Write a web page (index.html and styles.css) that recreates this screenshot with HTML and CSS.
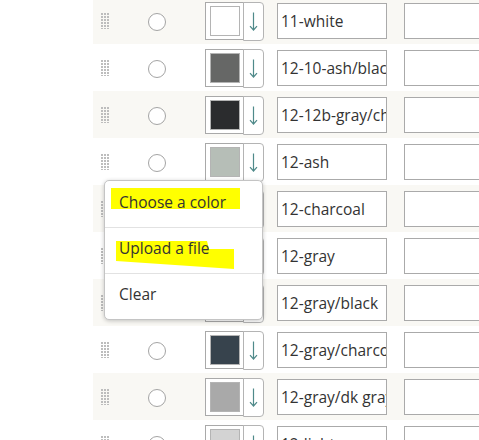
FILE: index.html
```html
<!DOCTYPE html>
<html>
<head>
<meta charset="utf-8">
<link rel="stylesheet" href="styles.css">
</head>
<body>
<div class="page">
  <div class="list">
    <div class="row alt">
      <span class="handle"></span><span class="radio"></span>
      <div class="picker"><span class="swatch-box"><span class="swatch" style="background:#ffffff"></span></span><span class="arrow-btn"><svg width="9" height="19" viewBox="0 0 9 19"><path d="M4.5 0.5V18M1 14.2L4.5 18L8 14.2" /></svg></span></div>
      <input class="name" value="11-white"><input class="extra" value="">
    </div>
    <div class="row">
      <span class="handle"></span><span class="radio"></span>
      <div class="picker"><span class="swatch-box"><span class="swatch" style="background:#666766"></span></span><span class="arrow-btn"><svg width="9" height="19" viewBox="0 0 9 19"><path d="M4.5 0.5V18M1 14.2L4.5 18L8 14.2" /></svg></span></div>
      <input class="name" value="12-10-ash/black"><input class="extra" value="">
    </div>
    <div class="row alt">
      <span class="handle"></span><span class="radio"></span>
      <div class="picker"><span class="swatch-box"><span class="swatch" style="background:#2b2c2e"></span></span><span class="arrow-btn"><svg width="9" height="19" viewBox="0 0 9 19"><path d="M4.5 0.5V18M1 14.2L4.5 18L8 14.2" /></svg></span></div>
      <input class="name" value="12-12b-gray/charcoal"><input class="extra" value="">
    </div>
    <div class="row">
      <span class="handle"></span><span class="radio"></span>
      <div class="picker"><span class="swatch-box"><span class="swatch" style="background:#b6beb7"></span></span><span class="arrow-btn"><svg width="9" height="19" viewBox="0 0 9 19"><path d="M4.5 0.5V18M1 14.2L4.5 18L8 14.2" /></svg></span></div>
      <input class="name" value="12-ash"><input class="extra" value="">
    </div>
    <div class="row alt">
      <span class="handle"></span><span class="radio"></span>
      <div class="picker"><span class="swatch-box"><span class="swatch" style="background:#36454f"></span></span><span class="arrow-btn"><svg width="9" height="19" viewBox="0 0 9 19"><path d="M4.5 0.5V18M1 14.2L4.5 18L8 14.2" /></svg></span></div>
      <input class="name" value="12-charcoal"><input class="extra" value="">
    </div>
    <div class="row">
      <span class="handle"></span><span class="radio"></span>
      <div class="picker"><span class="swatch-box"><span class="swatch" style="background:#808080"></span></span><span class="arrow-btn"><svg width="9" height="19" viewBox="0 0 9 19"><path d="M4.5 0.5V18M1 14.2L4.5 18L8 14.2" /></svg></span></div>
      <input class="name" value="12-gray"><input class="extra" value="">
    </div>
    <div class="row alt">
      <span class="handle"></span><span class="radio"></span>
      <div class="picker"><span class="swatch-box"><span class="swatch" style="background:#555555"></span></span><span class="arrow-btn"><svg width="9" height="19" viewBox="0 0 9 19"><path d="M4.5 0.5V18M1 14.2L4.5 18L8 14.2" /></svg></span></div>
      <input class="name" value="12-gray/black"><input class="extra" value="">
    </div>
    <div class="row">
      <span class="handle"></span><span class="radio"></span>
      <div class="picker"><span class="swatch-box"><span class="swatch" style="background:#37434d"></span></span><span class="arrow-btn"><svg width="9" height="19" viewBox="0 0 9 19"><path d="M4.5 0.5V18M1 14.2L4.5 18L8 14.2" /></svg></span></div>
      <input class="name" value="12-gray/charcoal"><input class="extra" value="">
    </div>
    <div class="row alt">
      <span class="handle"></span><span class="radio"></span>
      <div class="picker"><span class="swatch-box"><span class="swatch" style="background:#a9a9a9"></span></span><span class="arrow-btn"><svg width="9" height="19" viewBox="0 0 9 19"><path d="M4.5 0.5V18M1 14.2L4.5 18L8 14.2" /></svg></span></div>
      <input class="name" value="12-gray/dk gray"><input class="extra" value="">
    </div>
    <div class="row">
      <span class="handle"></span><span class="radio"></span>
      <div class="picker"><span class="swatch-box"><span class="swatch" style="background:#d3d3d3"></span></span><span class="arrow-btn"><svg width="9" height="19" viewBox="0 0 9 19"><path d="M4.5 0.5V18M1 14.2L4.5 18L8 14.2" /></svg></span></div>
      <input class="name" value="12-light gray"><input class="extra" value="">
    </div>
  </div>

  <div class="menu">
    <div class="item first">
      <span class="hl-rect"></span>
      <span class="label">Choose a color</span>
    </div>
    <div class="item second">
      <svg class="hl-poly" width="130" height="32" viewBox="0 0 130 32"><polygon points="0,0 91,0 93,8 118,8 118,28 0,20" /></svg>
      <span class="label">Upload a file</span>
    </div>
    <div class="item">
      <span class="label">Clear</span>
    </div>
  </div>
</div>
</body>
</html>
```

FILE: styles.css
```css
html, body {
  margin: 0;
  padding: 0;
  background: #ffffff;
}

body {
  width: 479px;
  height: 440px;
  overflow: hidden;
  font-family: "Open Sans", "Liberation Sans", sans-serif;
  color: #333333;
}

.page {
  position: relative;
  width: 479px;
  height: 440px;
  overflow: hidden;
}

.list {
  margin-top: -3px;
  margin-left: 93px;
  display: flex;
  flex-direction: column;
}

.row {
  height: 47px;
  box-sizing: border-box;
  padding-top: 1px;
  padding-left: 8px;
  display: flex;
  align-items: center;
  background: #ffffff;
  white-space: nowrap;
}

.row.alt {
  background: #f9f8f4;
}

.handle {
  flex: none;
  width: 9px;
  height: 16px;
  background-image: linear-gradient(to bottom, #bdbdbd 0, #bdbdbd 2px, transparent 2px);
  background-size: 3px 3px;
  -webkit-mask-image: linear-gradient(to right, #000 0, #000 2px, transparent 2px);
  -webkit-mask-size: 3px 3px;
  mask-image: linear-gradient(to right, #000 0, #000 2px, transparent 2px);
  mask-size: 3px 3px;
}

.radio {
  flex: none;
  width: 18px;
  height: 18px;
  box-sizing: border-box;
  margin-left: 38px;
  margin-top: 2px;
  border: 1px solid #a4a4a4;
  border-radius: 50%;
  background: #ffffff;
}

.picker {
  flex: none;
  margin-left: 39px;
  display: flex;
  height: 38px;
}

.swatch-box {
  width: 39px;
  height: 38px;
  box-sizing: border-box;
  border: 1px solid #a9a9a9;
  background: #ffffff;
  display: flex;
  align-items: center;
  justify-content: center;
}

.swatch {
  width: 30px;
  height: 30px;
  box-sizing: border-box;
  border: 1px solid #b4b4b4;
}

.arrow-btn {
  width: 21px;
  height: 39px;
  margin-left: -1px;
  box-sizing: border-box;
  border: 1px solid #b4b4b4;
  border-radius: 0 4px 4px 0;
  background: #ffffff;
  display: flex;
  align-items: center;
  justify-content: center;
}

.arrow-btn svg {
  display: block;
  fill: none;
  stroke: #4f8a8a;
  stroke-width: 1.2;
}

.name, .extra {
  flex: none;
  height: 36px;
  width: 110px;
  box-sizing: border-box;
  border: 1px solid #aaaaaa;
  border-radius: 0;
  padding: 0 0 1px 3px;
  margin: 0;
  font-family: "Open Sans", "Liberation Sans", sans-serif;
  font-size: 15.5px;
  color: #333333;
  background: #ffffff;
  outline: none;
}

.name {
  margin-left: 13px;
}

.extra {
  margin-left: 17px;
}

.menu {
  position: absolute;
  left: 104px;
  top: 180px;
  width: 159px;
  box-sizing: border-box;
  border: 1px solid #c4c4c4;
  border-radius: 5px;
  background: #ffffff;
  box-shadow: 0 1px 4px rgba(0, 0, 0, 0.22);
  display: flex;
  flex-direction: column;
}

.item {
  position: relative;
  height: 46px;
  box-sizing: border-box;
  padding-bottom: 5px;
  display: flex;
  align-items: center;
  padding-left: 14px;
  font-size: 15.5px;
  color: #333333;
  border-top: 1px solid #e2e2e2;
}

.item.first {
  border-top: none;
  height: 46px;
}

.label {
  position: relative;
  z-index: 1;
}

.hl-rect {
  position: absolute;
  left: 6px;
  top: 7px;
  width: 129px;
  height: 21px;
  background: #ffff00;
}

.hl-poly {
  position: absolute;
  left: 11px;
  top: 13px;
}

.hl-poly polygon {
  fill: #ffff00;
}
```
